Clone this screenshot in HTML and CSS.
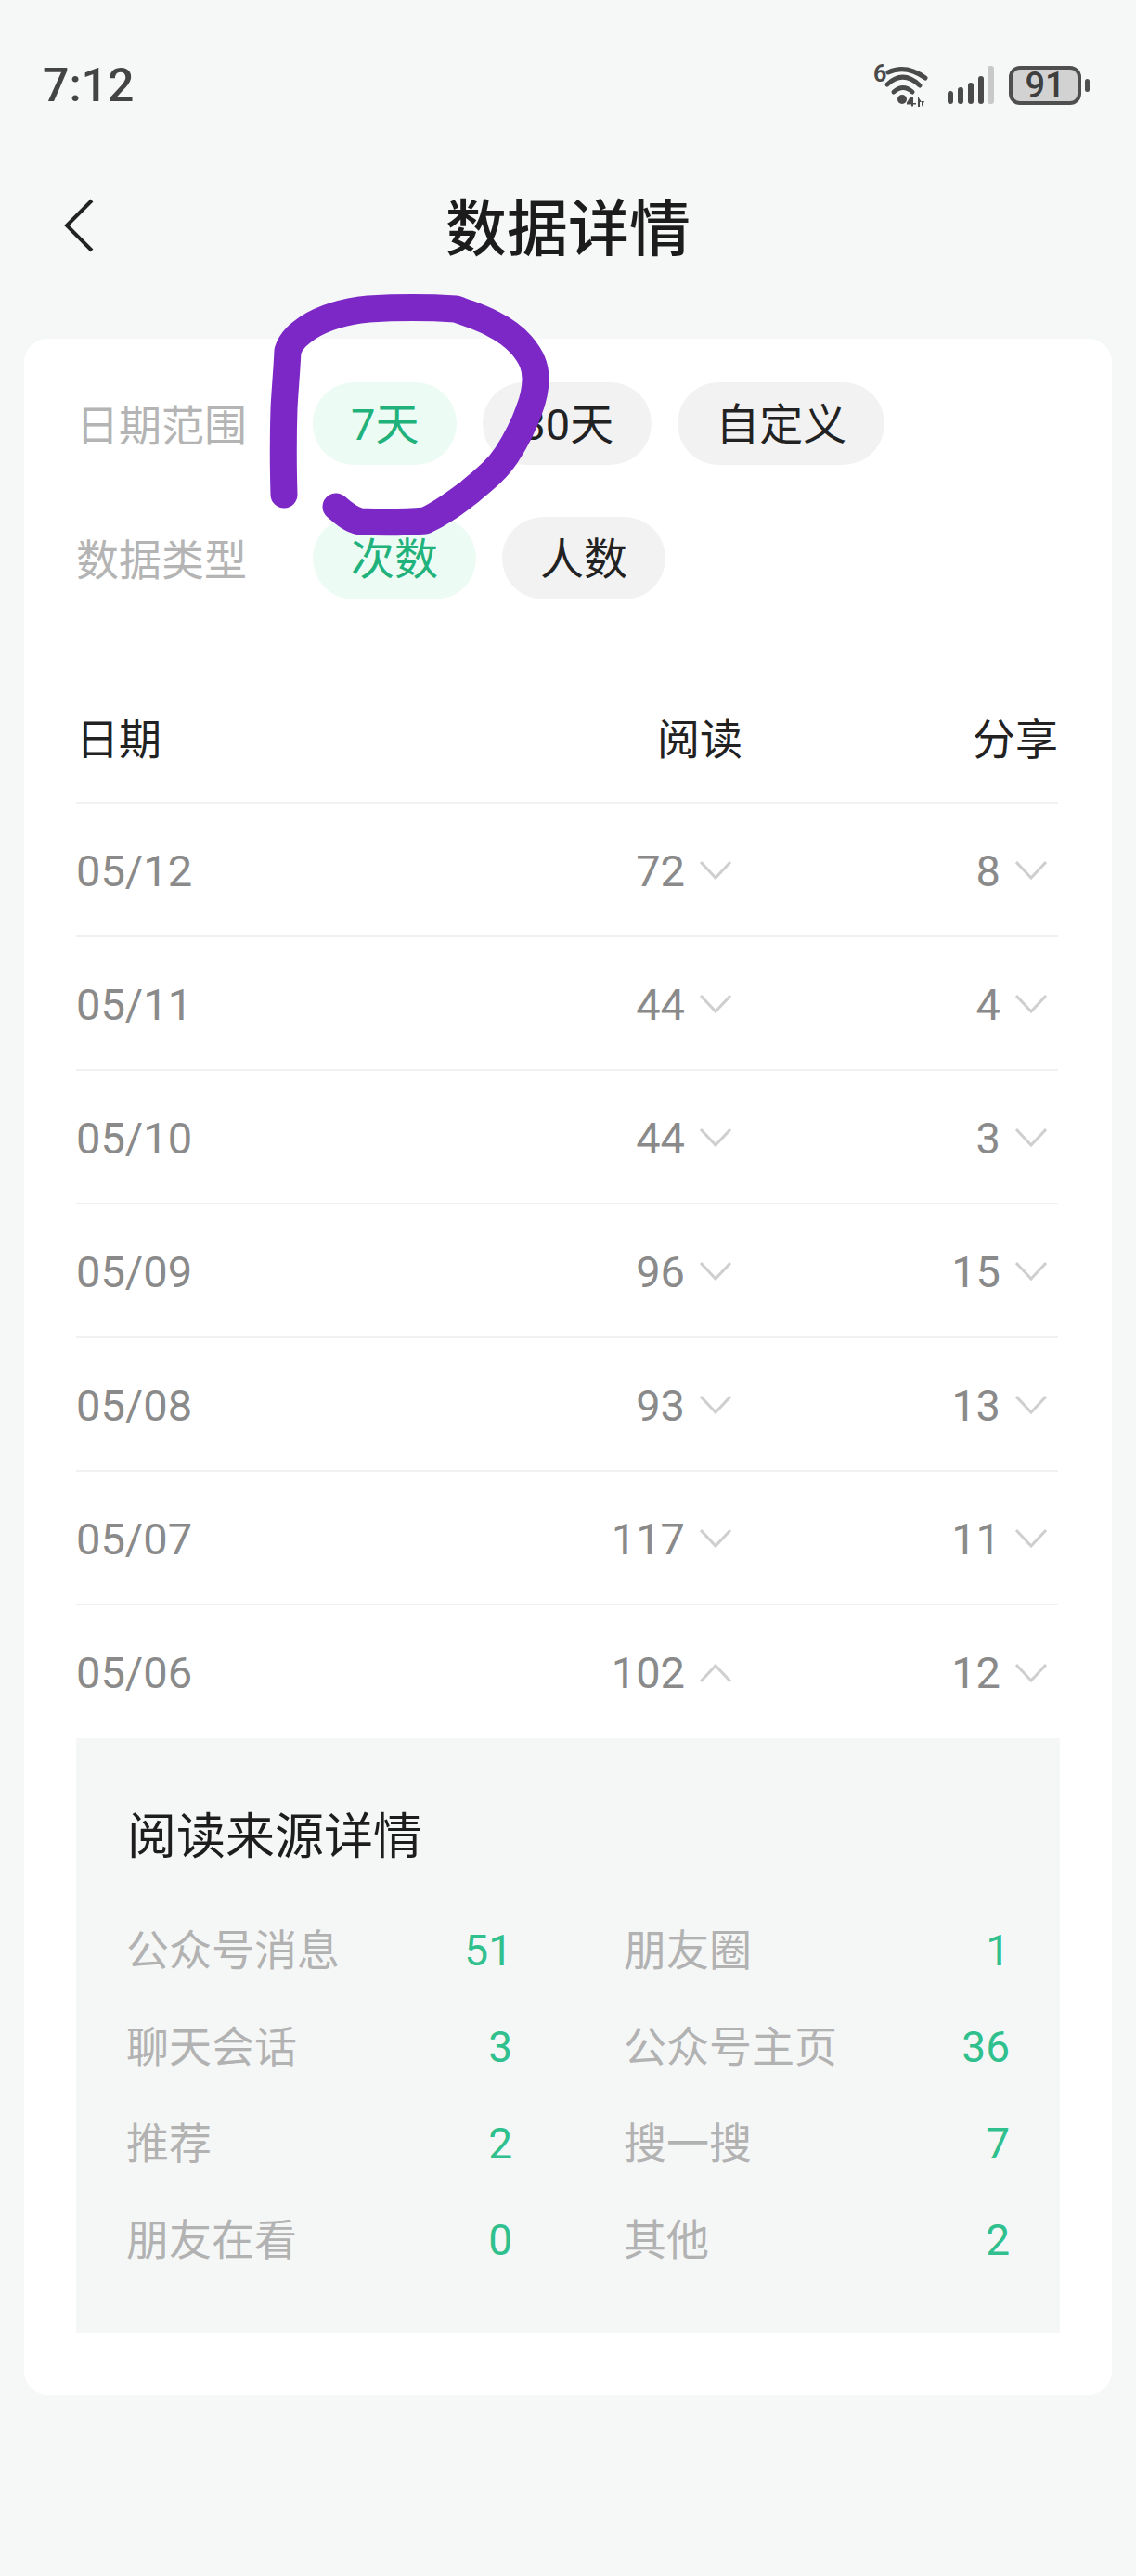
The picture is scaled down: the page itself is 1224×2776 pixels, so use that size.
FILE: index.html
```html
<!DOCTYPE html>
<html lang="zh-CN">
<head>
<meta charset="utf-8">
<title>数据详情</title>
<link rel="stylesheet" href="styles.css">
</head>
<body>
<div class="app">
  <div class="status">
    <span class="time">7:12</span>
    <div class="status-icons">
      <div class="wifi-box">
        <span class="wifi-six">6</span>
        <svg class="wifi" width="60" height="50" viewBox="0 0 60 50">
          <g fill="none" stroke="#4a4a4a" stroke-width="5" stroke-linecap="round">
            <path d="M17 11 Q36 2 57 17"/>
            <path d="M16 24 Q33 8 51 25"/>
            <path d="M23 32 Q33 23 43 32"/>
          </g>
          <circle cx="32" cy="40" r="5" fill="#4a4a4a"/>
          <path d="M41 37 h3 v7 h3 v1.500 h-3 v2 h-2 v-2 h-5 v-2 z" fill="#4a4a4a"/>
          <path d="M49 37 l4 6 h-2 v5 h-2 z M53 48 v-6 l3 0 z" fill="#4a4a4a"/>
        </svg>
      </div>
      <svg class="signal" width="51" height="42" viewBox="0 0 51 42">
        <rect x="1" y="27" width="6" height="14" rx="3" fill="#4a4a4a"/>
        <rect x="12" y="23" width="6" height="18" rx="3" fill="#4a4a4a"/>
        <rect x="23" y="18" width="6" height="23" rx="3" fill="#4a4a4a"/>
        <rect x="34" y="11" width="6" height="30" rx="3" fill="#4a4a4a"/>
        <rect x="44" y="0" width="7" height="41" rx="3" fill="#c9c9c9"/>
      </svg>
      <div class="battery"><span class="battery-level">91</span></div>
      <span class="battery-nub"></span>
    </div>
  </div>

  <header class="nav">
    <svg class="back" width="32" height="58" viewBox="0 0 32 58">
      <path d="M30 2 L3 29 L30 56" fill="none" stroke="#222" stroke-width="4"/>
    </svg>
    <h1 class="title">数据详情</h1>
  </header>

  <main class="card">
    <div class="filter">
      <span class="filter-label">日期范围</span>
      <span class="pill pill-on">7天</span>
      <span class="pill">30天</span>
      <span class="pill">自定义</span>
    </div>
    <div class="filter filter-second">
      <span class="filter-label">数据类型</span>
      <span class="pill pill-on">次数</span>
      <span class="pill">人数</span>
    </div>

    <div class="table">
      <div class="row row-head">
        <span class="cell-date">日期</span>
        <span class="cell">阅读</span>
        <span class="cell">分享</span>
      </div>
      <div class="row">
        <span class="cell-date">05/12</span>
        <span class="cell">72<svg class="chev" viewBox="0 0 34 20"><path d="M1 1 L17 18 L33 1"/></svg></span>
        <span class="cell">8<svg class="chev" viewBox="0 0 34 20"><path d="M1 1 L17 18 L33 1"/></svg></span>
      </div>
      <div class="row">
        <span class="cell-date">05/11</span>
        <span class="cell">44<svg class="chev" viewBox="0 0 34 20"><path d="M1 1 L17 18 L33 1"/></svg></span>
        <span class="cell">4<svg class="chev" viewBox="0 0 34 20"><path d="M1 1 L17 18 L33 1"/></svg></span>
      </div>
      <div class="row">
        <span class="cell-date">05/10</span>
        <span class="cell">44<svg class="chev" viewBox="0 0 34 20"><path d="M1 1 L17 18 L33 1"/></svg></span>
        <span class="cell">3<svg class="chev" viewBox="0 0 34 20"><path d="M1 1 L17 18 L33 1"/></svg></span>
      </div>
      <div class="row">
        <span class="cell-date">05/09</span>
        <span class="cell">96<svg class="chev" viewBox="0 0 34 20"><path d="M1 1 L17 18 L33 1"/></svg></span>
        <span class="cell">15<svg class="chev" viewBox="0 0 34 20"><path d="M1 1 L17 18 L33 1"/></svg></span>
      </div>
      <div class="row">
        <span class="cell-date">05/08</span>
        <span class="cell">93<svg class="chev" viewBox="0 0 34 20"><path d="M1 1 L17 18 L33 1"/></svg></span>
        <span class="cell">13<svg class="chev" viewBox="0 0 34 20"><path d="M1 1 L17 18 L33 1"/></svg></span>
      </div>
      <div class="row">
        <span class="cell-date">05/07</span>
        <span class="cell">117<svg class="chev" viewBox="0 0 34 20"><path d="M1 1 L17 18 L33 1"/></svg></span>
        <span class="cell">11<svg class="chev" viewBox="0 0 34 20"><path d="M1 1 L17 18 L33 1"/></svg></span>
      </div>
      <div class="row row-last">
        <span class="cell-date">05/06</span>
        <span class="cell">102<svg class="chev" viewBox="0 0 34 20"><path d="M1 19 L17 2 L33 19"/></svg></span>
        <span class="cell">12<svg class="chev" viewBox="0 0 34 20"><path d="M1 1 L17 18 L33 1"/></svg></span>
      </div>
    </div>

    <section class="panel">
      <h2 class="panel-title">阅读来源详情</h2>
      <div class="sources">
        <div class="source"><span>公众号消息</span><span class="source-num">51</span></div>
        <div class="source"><span>朋友圈</span><span class="source-num">1</span></div>
        <div class="source"><span>聊天会话</span><span class="source-num">3</span></div>
        <div class="source"><span>公众号主页</span><span class="source-num">36</span></div>
        <div class="source"><span>推荐</span><span class="source-num">2</span></div>
        <div class="source"><span>搜一搜</span><span class="source-num">7</span></div>
        <div class="source"><span>朋友在看</span><span class="source-num">0</span></div>
        <div class="source"><span>其他</span><span class="source-num">2</span></div>
      </div>
    </section>
  </main>

  <svg class="scribble" width="1224" height="700" viewBox="0 0 1224 700">
    <path d="M306 533 C305 500 305 470 306 440 C307 420 309 400 310 378 C314 366 322 360 332 353 C346 344 368 336 397 333 C430 331 460 331 491 333 C505 338 518 342 531 349 C545 356 555 364 562 372 C573 385 577 395 577 408 C577 422 574 432 570 442 C563 462 555 476 546 490 C534 508 520 518 506 530 C490 542 476 553 458 561 C436 563 410 563 388 562 C378 560 370 553 362 546" fill="none" stroke="#7c28c6" stroke-width="29" stroke-linecap="round" stroke-linejoin="round"/>
  </svg>
</div>
</body>
</html>
```
FILE: styles.css
```css
* { box-sizing: border-box; }
html, body { margin: 0; padding: 0; }
body {
  background: #f6f8f7;
  font-family: Roboto, "Noto Sans CJK SC", sans-serif;
  color: #222;
}
.app { position: relative; width: 1224px; height: 2776px; overflow: hidden; }

.status {
  display: flex;
  justify-content: space-between;
  align-items: center;
  height: 64px;
  padding: 0 50px 0 46px;
  position: relative;
  top: 60px;
}
.time { font-size: 50px; line-height: 64px; color: #444; font-weight: 500; }
.status-icons { display: flex; align-items: center; }
.wifi-box { position: relative; width: 60px; height: 50px; }
.wifi { display: block; }
.wifi-six {
  position: absolute;
  left: 1px;
  top: 0;
  font-size: 25px;
  line-height: 26px;
  font-weight: 700;
  color: #4a4a4a;
}
.signal { display: block; margin-left: 20px; }
.battery {
  display: flex;
  align-items: center;
  justify-content: center;
  width: 78px;
  height: 42px;
  margin-left: 16px;
  background: #d2d2d2;
  border: 4px solid #4f4f4f;
  border-radius: 12px;
}
.battery-level { font-size: 38px; line-height: 34px; font-weight: 500; color: #3e3e3e; }
.battery-nub { width: 5px; height: 14px; margin-left: 4px; border-radius: 3px; background: #4f4f4f; }

.nav {
  display: grid;
  grid-template-columns: 1fr auto 1fr;
  align-items: center;
  height: 238px;
  margin-top: 60px;
  margin-bottom: 3px;
  padding: 0 69px;
}
.back { display: block; }
.title { grid-column: 2; margin: 0; padding-top: 10px; font-size: 66px; line-height: 80px; font-weight: 500; color: #1c1c1c; }

.card {
  margin: 0 26px;
  padding: 47px 56px 67px;
  background: #fff;
  border-radius: 26px;
}
.filter { display: flex; align-items: center; gap: 28px; height: 89px; }
.filter-second { margin-top: 56px; }
.filter-label {
  width: 227px;
  padding-right: 43px;
  padding-bottom: 4px;
  font-size: 46px;
  color: #b4b4b4;
  white-space: nowrap;
}
.pill {
  height: 89px;
  padding: 0 41px;
  border-radius: 45px;
  background: #f2f2f2;
  font-size: 47px;
  line-height: 91px;
  color: #222;
}
.pill-on { background: #ecfbf3; color: #21b27c; }

.table { margin: 76px 2px 0 0; }
.row {
  display: grid;
  grid-template-columns: 1fr 340px 340px;
  align-items: center;
  height: 144px;
  padding-top: 2px;
  border-bottom: 2px solid #f1f1f1;
  font-size: 47px;
  font-weight: 400;
  color: #8a8a8a;
}
.row-head { padding-top: 0; font-size: 46px; color: #222; }
.row-last { border-bottom: 0; height: 143px; }
.cell-date { white-space: nowrap; }
.cell { display: flex; align-items: center; justify-content: flex-end; white-space: nowrap; }
.chev {
  width: 34px;
  height: 20px;
  margin: 0 12px 0 16px;
  fill: none;
  stroke: #cfcfcf;
  stroke-width: 3;
}

.panel {
  padding: 77px 54px 48px 54px;
  background: #f5f7f6;
}
.panel-title { margin: 0 0 40px; padding-left: 1px; font-size: 53px; line-height: 60px; font-weight: 400; color: #1d1d1d; }
.sources { display: grid; grid-template-columns: 416px 416px; column-gap: 120px; }
.source {
  display: flex;
  justify-content: space-between;
  height: 104px;
  line-height: 104px;
  font-size: 46px;
  color: #b2b2b2;
  white-space: nowrap;
}
.source-num { font-size: 46px; color: #2fc08e; }

.scribble { position: absolute; left: 0; top: 0; pointer-events: none; }
```
